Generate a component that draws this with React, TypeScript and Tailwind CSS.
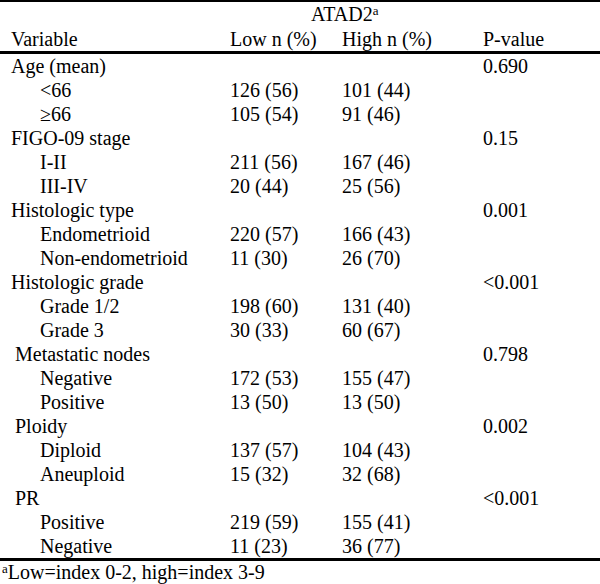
import React from "react";

type Row = { label: string; low?: string; high?: string; p?: string; indent?: "sub" | "space" };

const rows: Row[] = [
  { label: "Age (mean)", p: "0.690" },
  { label: "<66", low: "126 (56)", high: "101 (44)", indent: "sub" },
  { label: "\u226566", low: "105 (54)", high: "91 (46)", indent: "sub" },
  { label: "FIGO-09 stage", p: "0.15" },
  { label: "I-II", low: "211 (56)", high: "167 (46)", indent: "sub" },
  { label: "III-IV", low: "20 (44)", high: "25 (56)", indent: "sub" },
  { label: "Histologic type", p: "0.001" },
  { label: "Endometrioid", low: "220 (57)", high: "166 (43)", indent: "sub" },
  { label: "Non-endometrioid", low: "11 (30)", high: "26 (70)", indent: "sub" },
  { label: "Histologic grade", p: "<0.001" },
  { label: "Grade 1/2", low: "198 (60)", high: "131 (40)", indent: "sub" },
  { label: "Grade 3", low: "30 (33)", high: "60 (67)", indent: "sub" },
  { label: "Metastatic nodes", p: "0.798", indent: "space" },
  { label: "Negative", low: "172 (53)", high: "155 (47)", indent: "sub" },
  { label: "Positive", low: "13 (50)", high: "13 (50)", indent: "sub" },
  { label: "Ploidy", p: "0.002", indent: "space" },
  { label: "Diploid", low: "137 (57)", high: "104 (43)", indent: "sub" },
  { label: "Aneuploid", low: "15 (32)", high: "32 (68)", indent: "sub" },
  { label: "PR", p: "<0.001", indent: "space" },
  { label: "Positive", low: "219 (59)", high: "155 (41)", indent: "sub" },
  { label: "Negative", low: "11 (23)", high: "36 (77)", indent: "sub" },
];

export default function App() {
  return (
    <div
      className="w-[600px] h-[584px] bg-white text-black text-[20px] leading-[24px]"
      style={{ fontFamily: '"Liberation Serif", "Times New Roman", serif' }}
    >
      <div className="h-[2px] bg-black" />
      <div className="h-[25px] pl-[311px]">
        ATAD2<span className="text-[13px] leading-none align-[0.5em]">a</span>
      </div>
      <div className="grid grid-cols-[219px_112px_141px_1fr] pl-[11px] h-[24px]">
        <div>Variable</div>
        <div>Low n (%)</div>
        <div>High n (%)</div>
        <div>P-value</div>
      </div>
      <div className="h-[3px] bg-black" />
      {rows.map((r, i) => (
        <div key={i} className="grid grid-cols-[219px_112px_141px_1fr] pl-[11px] h-[24px]">
          <div
            className={
              r.indent === "sub" ? "pl-[29px]" : r.indent === "space" ? "pl-[4px]" : ""
            }
          >
            {r.label}
          </div>
          <div>{r.low ?? ""}</div>
          <div>{r.high ?? ""}</div>
          <div>{r.p ?? ""}</div>
        </div>
      ))}
      <div className="h-[3px] bg-black" />
      <div className="pl-[2px] h-[24px] -mt-[1px]">
        <span className="text-[13px] leading-none align-[0.5em]">a</span>Low=index 0-2, high=index 3-9
      </div>
    </div>
  );
}
